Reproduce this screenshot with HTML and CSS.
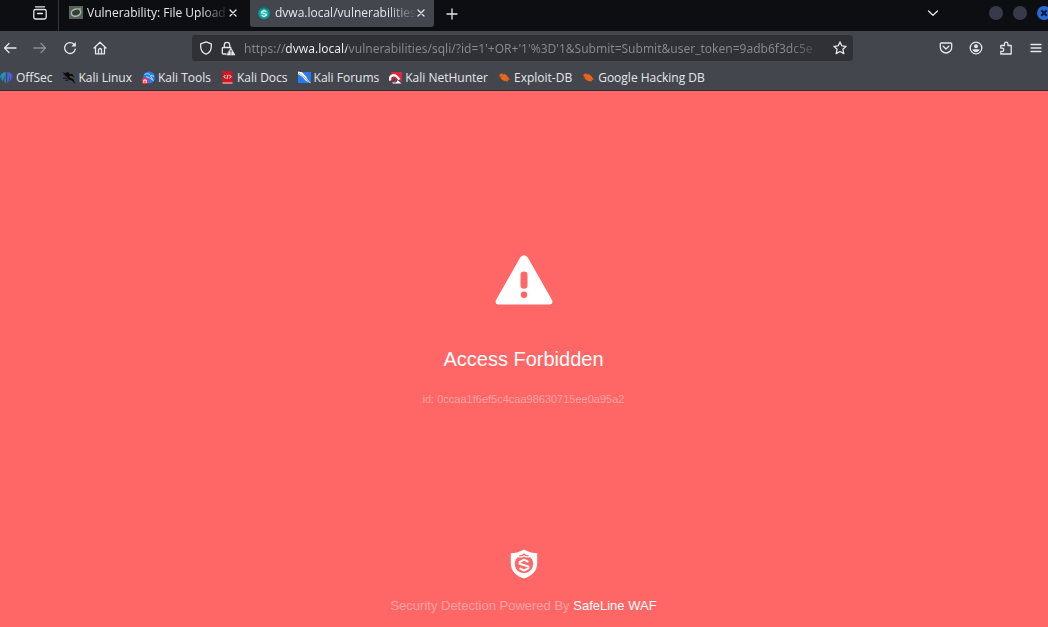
FILE: index.html
```html
<!DOCTYPE html>
<html lang="en">
<head>
<meta charset="utf-8">
<title>Access Forbidden</title>
<link rel="stylesheet" href="styles.css">
</head>
<body>
<header class="browser">
  <div class="tabbar">
    <button class="recent" aria-label="Firefox View">
      <svg width="16" height="16" viewBox="0 0 16 16" class="line"><path d="M3.500 1.800h9"/><rect x="1.800" y="4.500" width="12.400" height="9.500" rx="1.800"/><path d="M5.500 8.500h5"/></svg>
    </button>
    <div class="tab">
      <svg class="favicon" width="14" height="13" viewBox="0 0 14 13"><rect width="14" height="13" fill="#56605d"/><ellipse cx="7" cy="6.600" rx="4.800" ry="3.500" fill="#343d39" stroke="#a9b8a2" stroke-width="1.500" transform="rotate(-18 7 6.500)"/><path d="M8 2.500l4-1v3" fill="#87a36c"/></svg>
      <span class="tab-title">Vulnerability: File Upload</span>
      <button class="close" aria-label="Close tab"><svg width="8" height="8" viewBox="0 0 8 8" class="line"><path d="M1 1l6 6M7 1L1 7"/></svg></button>
    </div>
    <div class="tab active">
      <svg class="favicon" width="14" height="14" viewBox="0 0 14 14"><circle cx="7" cy="7.300" r="6" fill="#128f8d"/><circle cx="7" cy="7.500" r="4.300" fill="#1fb9ad"/><path d="M9.300 5.800L7 4.500 4.700 5.900v1L9.300 8.200v1L7 10.600 4.600 9.300" fill="none" stroke="#d6fffa" stroke-width="1.200"/><path d="M4 2.500l3-1.300 3 1.300" stroke="#0c6a70" fill="none"/></svg>
      <span class="tab-title">dvwa.local/vulnerabilities</span>
      <button class="close" aria-label="Close tab"><svg width="8" height="8" viewBox="0 0 8 8" class="line"><path d="M1 1l6 6M7 1L1 7"/></svg></button>
    </div>
    <button class="new-tab" aria-label="New tab"><svg width="12" height="12" viewBox="0 0 12 12" class="line"><path d="M6 1v10M1 6h10"/></svg></button>
    <div class="window-controls">
      <button class="list-tabs" aria-label="List all tabs"><svg width="12" height="12" viewBox="0 0 12 12" class="line"><path d="M1.500 4L6 8.300 10.500 4"/></svg></button>
      <button class="win" aria-label="Minimize"></button>
      <button class="win" aria-label="Maximize"></button>
      <button class="win win-close" aria-label="Close"><svg width="14" height="14" viewBox="0 0 14 14"><path d="M4.300 4.300l5.400 5.400M9.700 4.300l-5.400 5.400" stroke="#0b1733" stroke-width="2"/></svg></button>
    </div>
  </div>

  <div class="navbar">
    <div class="nav-buttons">
      <button aria-label="Back"><svg width="14" height="14" viewBox="0 0 14 14" class="line"><path d="M13 7H1.800M6 2.500L1.500 7 6 11.500"/></svg></button>
      <button aria-label="Forward" disabled><svg width="14" height="14" viewBox="0 0 14 14" class="line"><path d="M1 7h11.200M8 2.500L12.500 7 8 11.500"/></svg></button>
      <button aria-label="Reload"><svg width="14" height="14" viewBox="0 0 14 14" class="line"><path d="M12.300 8.200A5.400 5.400 0 1 1 10.900 3.300L12 4.500"/><path d="M12.800 1v4.500H8.300z" fill="#e6e6ea" stroke="none"/></svg></button>
      <button aria-label="Home"><svg width="14" height="14" viewBox="0 0 14 14" class="line"><path d="M1 7l6-5.800L13 7M2.500 6v6.800h9V6M5.500 12.500V9a1.500 1.500 0 0 1 3 0v3.500"/></svg></button>
    </div>
    <div class="urlbar">
      <svg width="14" height="14" viewBox="0 0 14 14" class="line"><path d="M7 .8l5.300 2v3C12.300 9.500 10 12 7 13.200 4 12 1.700 9.500 1.700 5.800v-3z"/></svg>
      <svg width="15" height="15" viewBox="0 0 15 15" class="line"><path d="M3.300 6.500V4a2.700 2.700 0 0 1 5.400 0v2.500M5 13H2.300a1 1 0 0 1-1-1V7.500a1 1 0 0 1 1-1h7.400"/><path d="M10 7l4 7H6z" fill="#e6e6ea" stroke="#e6e6ea" stroke-width=".6"/><path d="M10 9.500v1.700M10 12.900v.1" stroke="#303036" stroke-width="1"/></svg>
      <input class="url" type="text" aria-label="Address" value="https://dvwa.local/vulnerabilities/sqli/?id=1'+OR+'1'%3D'1&amp;Submit=Submit&amp;user_token=9adb6f3dc5e">
      <button aria-label="Bookmark this page"><svg width="14" height="14" viewBox="0 0 14 14" class="line"><path d="M7 .9l1.800 3.900 4.300.5-3.200 2.900.9 4.400L7 10.500l-3.800 2.100.9-4.400L.9 5.300l4.300-.5z"/></svg></button>
    </div>
    <div class="nav-tools">
      <button aria-label="Save to Pocket"><svg width="14" height="14" viewBox="0 0 14 14" class="line"><path d="M2.300 2h9.400a1 1 0 0 1 1 1v3.300a5.700 5.700 0 0 1-11.400 0V3a1 1 0 0 1 1-1z"/><path d="M4.200 5.300L7 8l2.800-2.700"/></svg></button>
      <button aria-label="Account"><svg width="14" height="14" viewBox="0 0 14 14" class="line"><circle cx="7" cy="7" r="5.800"/><circle cx="7" cy="5.200" r="2" fill="#e6e6ea" stroke="none"/><path d="M3.500 8.200h7c-.3 1.800-1.800 2.900-3.500 2.900S3.800 10 3.500 8.200z" fill="#e6e6ea" stroke="none"/></svg></button>
      <button aria-label="Extensions"><svg width="14" height="14" viewBox="0 0 14 14" class="line"><path d="M1.800 4.500h3.700V2.800a1.700 1.700 0 0 1 3.400 0v1.700h3.300v8.500H1.800v-2.600h1.400a1.600 1.600 0 0 0 0-3.200H1.800z"/></svg></button>
      <button aria-label="Menu"><svg width="14" height="14" viewBox="0 0 14 14" class="line"><path d="M2 3.500h10M2 7h10M2 10.500h10"/></svg></button>
    </div>
  </div>

  <nav class="bookmarks" aria-label="Bookmarks">
    <a href="#"><svg width="13" height="13" viewBox="0 0 13 13"><path d="M5.800 1v11.500L4.500 11V4L3 10 1.500 9V5L0 8C-.5 4 2 1.200 5.800 1z" fill="#258fbd"/><path d="M7.200 1c4 .3 6 3.500 5.500 7L11.300 5v4L9.800 10.500V4L8.500 11l-1.300 1.500z" fill="#4f5fe8"/></svg>OffSec</a>
    <a href="#"><svg width="13" height="13" viewBox="0 0 13 13"><path d="M0 1.300l3.500.8L6 1l1.500 1.700 3 .5L12.500 6 9 4.700l-2 .5 1.500 1.700 3 1.300L13 13l-2.800-3.300-3.700-1.400L4.300 5.500 2 5l2-.8L0 3.300l3-.1z" fill="#08090b"/><path d="M1 7.200l4 .3M3.500 9.500l3-.6" stroke="#111"/></svg>Kali Linux</a>
    <a href="#"><svg width="13" height="13" viewBox="0 0 13 13"><circle cx="7" cy="6.500" r="6" fill="#2b79e8"/><path d="M2.500 3.500c2.500-1.500 4.500-1 6 .8l3.500 1M8.500 5l2.800 4.500-3.800-2.800L4 5.500" fill="none" stroke="#b8d7ff"/><rect y="7" width="6" height="6" rx="1.500" fill="#ed3540"/><path d="M1.800 12V9h2.400v3" fill="none" stroke="#fff"/></svg>Kali Tools</a>
    <a href="#"><svg width="13" height="13" viewBox="0 0 13 13"><path d="M1.500 0h10v13h-10z" fill="#cf1820"/><path d="M1.500 11.500h10v1h-10z" fill="#edd"/><path d="M4.500 4L3 5.700l1.500 1.700M8.500 4L10 5.700 8.500 7.400M7 3.700L6 7.800" fill="none" stroke="#fff"/></svg>Kali Docs</a>
    <a href="#"><svg width="13" height="13" viewBox="0 0 13 13"><path d="M2 1h11v11H3L0 12V3z" fill="#2878ef"/><path d="M0 .5l4 .7 4 4 1.500 3L13 12.500 7.500 9.500 4.500 6 0 3z" fill="#fff"/><path d="M1 2l5 4 5 5" fill="none" stroke="#6b7c95" stroke-width=".7"/></svg>Kali Forums</a>
    <a href="#"><svg width="13" height="13" viewBox="0 0 13 13"><path d="M2 1h11v10L2 2z" fill="#e0283a"/><path d="M1.500 9.500C-.5 5.500 4 3 7 5l3.500 3.500" fill="none" stroke="#fff" stroke-width="2.400"/><path d="M3.300 9C3.500 6.300 6.300 6 7 7.500S6 11 4.500 9.800" fill="none" stroke="#d91f33" stroke-width="1.500"/><path d="M3 11c3 1.300 5 .5 5.500-2l4 3.500H4z" fill="#fff"/></svg>Kali NetHunter</a>
    <a href="#"><svg width="13" height="13" viewBox="0 0 13 13"><path d="M1 4l2-1.500 4 .5 2.500 2.200L12 9l-2.500-.5.800 2-4-.6-3-1.600L2.500 6z" fill="#e8651c"/><path d="M1 6l2 1M5 2.500L5.500 4" stroke="#a5481b"/></svg>Exploit-DB</a>
    <a href="#"><svg width="13" height="13" viewBox="0 0 13 13"><path d="M1 4l2-1.500 4 .5 2.500 2.200L12 9l-2.500-.5.800 2-4-.6-3-1.600L2.500 6z" fill="#e8651c"/><path d="M1 6l2 1M5 2.500L5.500 4" stroke="#a5481b"/></svg>Google Hacking DB</a>
  </nav>
</header>

<main class="blocked">
  <section class="message">
    <svg width="58" height="50" viewBox="0 0 58 50"><path fill="#fff" fill-rule="evenodd" d="M25.200 2.500Q29-1.800 32.800 2.500L57 45Q58.500 49 54.500 49.500H3.500Q-.5 49 1 45zM29 16.500a3.500 3.500 0 0 0-3.500 3.500v10.300a3.500 3.500 0 0 0 7 0V20a3.500 3.500 0 0 0-3.500-3.500zM29 36.500a3.200 3.200 0 1 0 0 6.400 3.200 3.200 0 0 0 0-6.400z"/></svg>
    <h1>Access Forbidden</h1>
    <p class="event">id: 0ccaa1f6ef5c4caa98630715ee0a95a2</p>
  </section>
  <footer class="powered">
    <svg width="28" height="30" viewBox="0 0 28 30"><path d="M14 .5Q20 4 27.200 4.300V14C27.200 22 22 27 14 29.500 6 27 .8 22 .8 14V4.300Q8 4 14 .5z" fill="#fff"/><path d="M7.500 8.500C2.500 13 4.500 23.700 14 24c9.500-.3 11.500-11 6.500-15.500H16L14 7.800l-2 .7z" fill="#f66"/><path d="M9.500 6.800l3-.5L14 5l1.500 1.300 3 .5" fill="none" stroke="#f66" stroke-width="1.300"/><path d="M18.500 13L14 10.700 9.700 13v1.700l8.600 2.800v1.600L14 21.500l-4.500-2.300" fill="none" stroke="#fff" stroke-width="2"/></svg>
    <p>Security Detection Powered By <a href="#">SafeLine WAF</a></p>
  </footer>
</main>
</body>
</html>
```
FILE: styles.css
```css
* { box-sizing: border-box; }

body {
  display: flex;
  flex-direction: column;
  min-height: 100vh;
  margin: 0;
  overflow-x: hidden;
  background: #ff6666;
  font-family: "Open Sans", "Noto Sans", sans-serif;
  font-size: 12px;
  color: #e6e6ea;
}

button {
  display: flex;
  align-items: center;
  justify-content: center;
  flex: none;
  padding: 0;
  border: 0;
  background: none;
  color: inherit;
}

button:disabled { opacity: 0.45; }

svg { display: block; flex: none; }

a { color: inherit; text-decoration: none; }

.line {
  fill: none;
  stroke: #e6e6ea;
  stroke-width: 1.3;
  stroke-linecap: round;
  stroke-linejoin: round;
}

.browser {
  background: #44464e;
  border-bottom: 1px solid #352c32;
}

.tabbar {
  display: flex;
  height: 31px;
  padding-bottom: 4px;
  background: #0d0e12;
}

.recent {
  width: 59px;
  margin-bottom: -4px;
  padding: 0 11px 5px 32px;
  border-right: 1px solid #35363b;
}

.tab {
  display: flex;
  align-items: center;
  gap: 4px;
  width: 184px;
  margin-left: 3px;
  padding: 0 9px 2px 7px;
  border-radius: 0 0 3px 3px;
}

.tab.active { margin-left: 4px; background: #44464e; }

.tab-title {
  flex: 1;
  margin-right: -4px;
  overflow: hidden;
  white-space: nowrap;
  mask-image: linear-gradient(to right, #000 80%, transparent);
}

.close { width: 8px; }
.new-tab { width: 36px; }

.window-controls {
  display: flex;
  align-items: center;
  gap: 10px;
  margin-left: auto;
  margin-right: -3px;
  padding-bottom: 2px;
}

.list-tabs { margin-right: 40px; }

.win {
  width: 14px;
  height: 14px;
  border-radius: 50%;
  background: #363a49;
}

.win-close { background: #2869d8; }

.navbar {
  display: flex;
  align-items: center;
  height: 34px;
}

.nav-buttons {
  display: flex;
  gap: 16px;
  width: 192px;
  padding-left: 3px;
}

.urlbar {
  display: flex;
  align-items: center;
  flex: 1;
  gap: 8px;
  height: 26px;
  padding: 0 6px 0 7px;
  border-radius: 3px;
  background: #303137;
}

.url {
  flex: 1;
  min-width: 0;
  padding: 0;
  border: 0;
  outline: 0;
  font-family: "Noto Sans", sans-serif;
  font-size: 12px;
  color: transparent;
  background: linear-gradient(to right, #88898e 41px, #f2f2f5 41px 103px, #88898e 103px calc(100% - 36px), transparent);
  background-clip: text;
}

.nav-tools {
  display: flex;
  justify-content: flex-end;
  gap: 16px;
  width: 195px;
  padding-right: 5px;
}

.bookmarks {
  display: flex;
  gap: 10px;
  height: 25px;
  white-space: nowrap;
}

.bookmarks a {
  display: flex;
  align-items: center;
  gap: 3px;
}

.blocked {
  display: flex;
  flex: 1;
  flex-direction: column;
  padding-right: 1px;
  font-family: "Liberation Sans", Arial, sans-serif;
  text-align: center;
}

.message {
  display: flex;
  flex: 1;
  flex-direction: column;
  align-items: center;
  justify-content: center;
  padding: 20px 0 0;
}

.message h1 {
  margin: 42px 0 0;
  font-size: 20px;
  font-weight: 400;
  line-height: 24px;
  color: #fff;
}

.event {
  margin: 22px 0 0;
  font-size: 11px;
  line-height: 12px;
  color: #ffa3a3;
}

.powered {
  display: flex;
  flex-direction: column;
  align-items: center;
  gap: 19px;
  padding-bottom: 13px;
}

.powered p {
  margin: 0;
  font-size: 13px;
  line-height: 16px;
  color: #ffa3a3;
}

.powered a { color: #fff; }
```
